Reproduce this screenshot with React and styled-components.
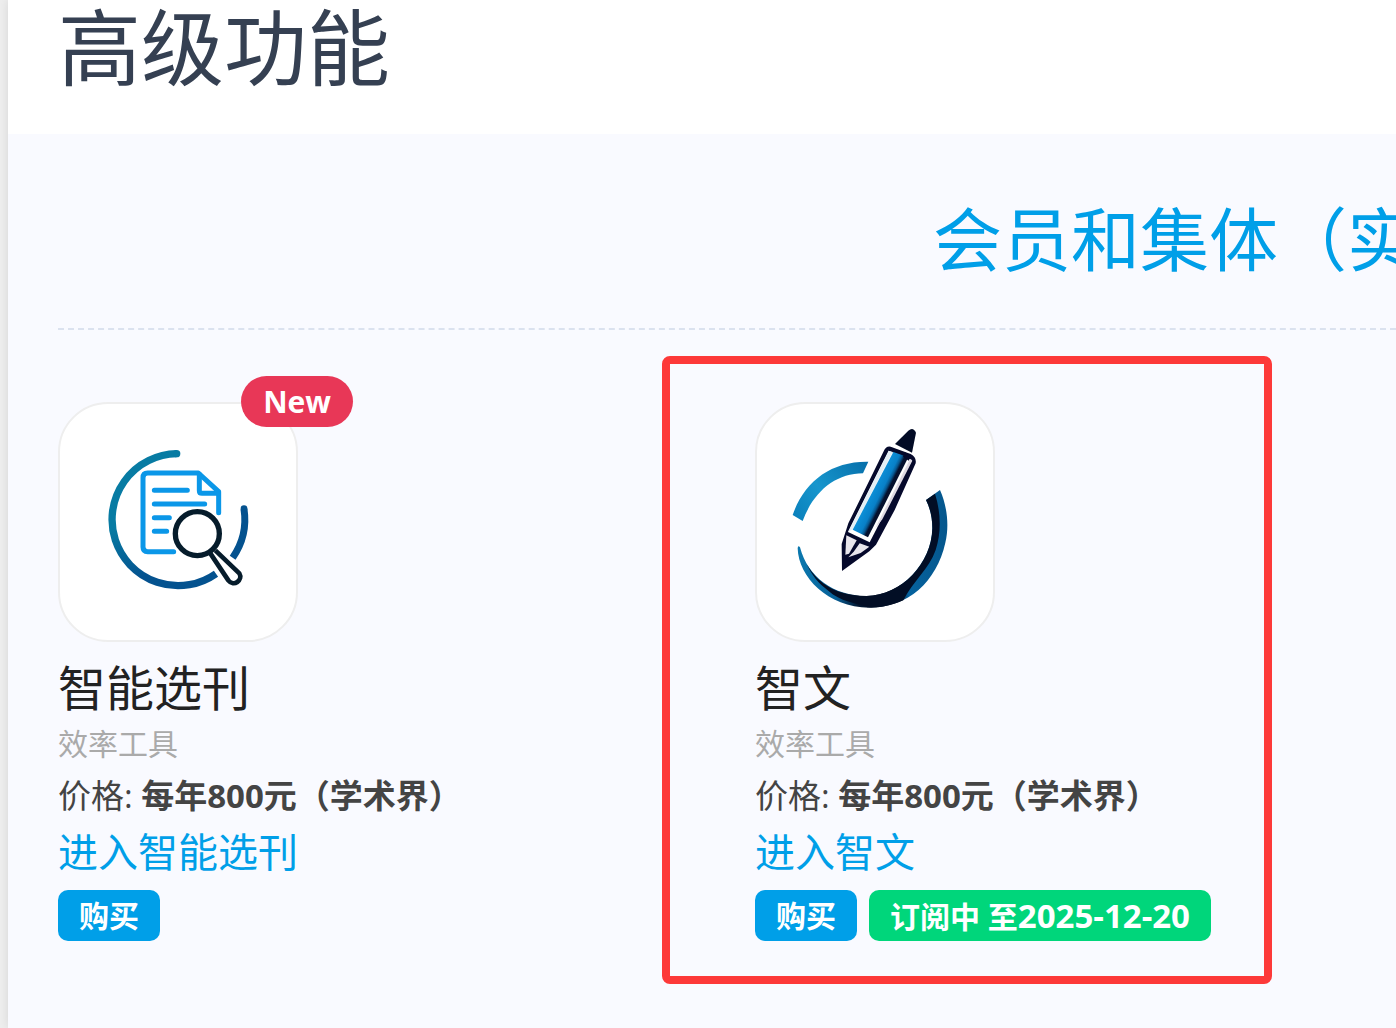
import React from "react";
import styled, { createGlobalStyle } from "styled-components";

const GlobalStyle = createGlobalStyle`
  *, *::before, *::after { box-sizing: border-box; }
  body {
    margin: 0;
    background: #eee;
    font-family: "Open Sans", "Noto Sans CJK SC", sans-serif;
    color: #222;
    overflow: hidden;
  }
  h1, h2, h3, p { margin: 0; font-weight: 400; }
`;

const Page = styled.div`
  min-height: 100vh;
  padding-left: 8px;
  display: flex;
`;

const Main = styled.main`
  flex: 1;
  min-width: 0;
  background: #f9faff;
  box-shadow: 0 0 10px rgba(0, 0, 0, 0.1);
`;

const TitleBar = styled.header`
  background: #fff;
  height: 134px;
  padding: 0 50px;
`;

const Title = styled.h1`
  font-size: 83px;
  line-height: 94px;
  color: #354052;
`;

const Content = styled.section`
  padding-left: 50px;
`;

const Notice = styled.h2`
  padding: 56px 0 40px 875px;
  border-bottom: 2px dashed #dbe2ef;
  font-size: 69px;
  line-height: 98px;
  color: #009fe8;
  white-space: nowrap;
  overflow: hidden;
`;

const Products = styled.div`
  display: grid;
  grid-template-columns: repeat(2, minmax(0, 1fr));
  column-gap: 56px;
  padding-top: 72px;
`;

const Card = styled.article`
  position: relative;
  display: flex;
  flex-direction: column;
  align-items: flex-start;
`;

const Highlight = styled.div`
  position: absolute;
  top: -46px;
  left: -93px;
  width: 610px;
  height: 628px;
  border: 8px solid #fd3939;
  border-radius: 8px;
  pointer-events: none;
`;

const Tile = styled.div`
  position: relative;
  width: 240px;
  height: 240px;
  border: 2px solid #eee;
  border-radius: 50px;
  background: #fff;
  margin-bottom: 14px;

  svg { display: block; width: 100%; height: 100%; }
`;

const NewBadge = styled.span`
  position: absolute;
  top: -28px;
  right: -57px;
  padding: 0 22px;
  border-radius: 26px;
  background: #e83757;
  color: #fff;
  font-size: 30px;
  line-height: 51px;
  font-weight: 700;
`;

const Name = styled.h3`
  font-size: 48px;
  line-height: 64px;
`;

const Category = styled.p`
  font-size: 30px;
  line-height: 48px;
  color: #aaa;
`;

const Price = styled.p`
  font-size: 33px;
  line-height: 56px;
  color: #444;
  white-space: nowrap;
`;

const EnterLink = styled.a`
  font-size: 40px;
  line-height: 56px;
  color: #009fe8;
  text-decoration: none;
`;

const Actions = styled.div`
  display: flex;
  gap: 12px;
  margin-top: 10px;
`;

const ActionButton = styled.button`
  height: 51px;
  border: 0;
  border-radius: 10px;
  padding: 0 21px;
  background: ${(p) => (p.$active ? "#00d67b" : "#009fe8")};
  color: #fff;
  font-family: inherit;
  font-size: 30px;
  line-height: 51px;
  font-weight: 700;
  white-space: nowrap;
`;

const ExpiryDate = styled.time`
  font-size: 33px;
`;

function SearchDocIcon() {
  return (
    <svg viewBox="-90 -78 708 708" fill="none" aria-hidden="true">
      <defs>
        <linearGradient id="ring" x1="100" y1="70" x2="260" y2="470" gradientUnits="userSpaceOnUse">
          <stop offset="0.45" stopColor="#077ba3" />
          <stop offset="0.85" stopColor="#04528f" />
        </linearGradient>
      </defs>
      <path d="M260 71A198 198 0 1 0 378 431" stroke="url(#ring)" strokeWidth="22" />
      <circle cx="260" cy="71" r="11" fill="#077ba3" />
      <path d="M428 383A202 202 0 0 0 462 237" stroke="#04528f" strokeWidth="21" />
      <circle cx="462" cy="236" r="10" fill="#04528f" />
      <g stroke="#0b97e8" strokeWidth="15" strokeLinecap="round" strokeLinejoin="round">
        <path d="M251 365H173Q159 365 159 351V143Q159 129 173 129H325L386 185V248" />
        <path d="M328 133V182Q328 190 336 190H384" />
        <path d="M193 181H292M193 222H344M193 263H238M193 304H230" />
      </g>
      <g stroke="#061c2b" strokeWidth="16" strokeLinejoin="round">
        <path d="M361 370L415 451C431 472 460 450 448 430L376 361" fill="#fff" strokeWidth="14" />
        <circle cx="322" cy="311" r="66" fill="#fff" />
      </g>
    </svg>
  );
}

function PenIcon() {
  return (
    <svg viewBox="-69 -48 708 708" fill="none" aria-hidden="true">
      <defs>
        <linearGradient id="arc" x1="50" y1="290" x2="260" y2="130" gradientUnits="userSpaceOnUse">
          <stop offset="0" stopColor="#0b82bd" />
          <stop offset="0.4" stopColor="#1796cd" />
          <stop offset="1" stopColor="#0770ab" />
        </linearGradient>
        <linearGradient id="crescent" x1="55" y1="0" x2="503" y2="0" gradientUnits="userSpaceOnUse">
          <stop offset="0" stopColor="#0b78ae" />
          <stop offset="0.25" stopColor="#086098" />
          <stop offset="0.4" stopColor="#021630" />
          <stop offset="0.66" stopColor="#021630" />
          <stop offset="0.74" stopColor="#06639f" />
          <stop offset="1" stopColor="#05568c" />
        </linearGradient>
        <linearGradient id="barrel" x1="280" y1="205" x2="326" y2="228" gradientUnits="userSpaceOnUse">
          <stop offset="0" stopColor="#0c90d8" />
          <stop offset="0.5" stopColor="#0880c8" />
          <stop offset="0.66" stopColor="#075a94" />
          <stop offset="0.82" stopColor="#04102d" />
        </linearGradient>
      </defs>
      <path d="M38 285C73 184 153 123 265 125L249 160C166 160 100 216 68 303Z" fill="url(#arc)" />
      <path d="M480 210C502 260 508 318 496 368C470 485 384 563 268 563C143 563 55 470 53 385Q54 374 60 382C84 472 160 528 260 528C365 526 455 430 457 325Q457 278 438 240Z" fill="url(#crescent)" />
      <path d="M438 240L465 221C482 275 485 335 467 390C448 446 400 482 370 541C325 562 285 563 262 562C230 548 180 545 145 512C115 490 95 465 80 432C116 497 183 530 260 528C365 526 455 430 457 325Q457 278 438 240Z" fill="#020e25" />
      <path d="M345 72L385 32Q399 19 408 38L396 98Z" fill="#020b25" />
      <path d="M332 80L392 102Q410 111 407 130L344 270L288 374L268 394L186 453L185 372L205 310L310 96Q318 77 332 80Z" fill="#05092b" />
      <path d="M326 92L396 120L269 367L204 336Z" fill="#fff" />
      <path d="M326 92L338 96L218 328L204 336Z" fill="#e4eff5" />
      <path d="M340 96L385 112L264 352L218 329Z" fill="url(#barrel)" />
      <path d="M390 117L397 122L307 298L285 326Z" fill="#ded9e2" />
      <path d="M375 97L393 108L386 122L369 110Z" fill="#05092b" />
      <path d="M199 346L230 361L207 401L196 404Z" fill="#e8e6ec" />
      <path d="M239 370L268 380L242 399L205 412L221 395Z" fill="#e8e6ec" />
    </svg>
  );
}

const products = [
  { name: "智能选刊", icon: <SearchDocIcon />, isNew: true },
  { name: "智文", icon: <PenIcon />, expires: "2025-12-20", highlighted: true },
];

export default function App() {
  return (
    <Page>
      <GlobalStyle />
      <Main>
        <TitleBar>
          <Title>高级功能</Title>
        </TitleBar>
        <Content>
          <Notice>会员和集体（实</Notice>
          <Products>
            {products.map((p) => (
              <Card key={p.name}>
                <Tile>
                  {p.icon}
                  {p.isNew && <NewBadge>New</NewBadge>}
                </Tile>
                <Name>{p.name}</Name>
                <Category>效率工具</Category>
                <Price>
                  价格: <strong>每年800元（学术界）</strong>
                </Price>
                <EnterLink href="#">进入{p.name}</EnterLink>
                <Actions>
                  <ActionButton type="button">购买</ActionButton>
                  {p.expires && (
                    <ActionButton type="button" $active>
                      订阅中 至<ExpiryDate dateTime={p.expires}>{p.expires}</ExpiryDate>
                    </ActionButton>
                  )}
                </Actions>
                {p.highlighted && <Highlight />}
              </Card>
            ))}
          </Products>
        </Content>
      </Main>
    </Page>
  );
}
